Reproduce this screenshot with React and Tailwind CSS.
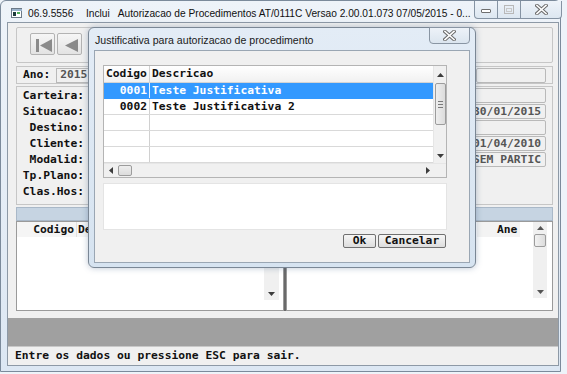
import React from "react";

const MONO = "font-['DejaVu_Sans_Mono',monospace] font-bold text-[11.3px] leading-none";
const SANS = "font-['Liberation_Sans',Arial,sans-serif]";

function Arrow({ dir, color = "#3c3c3c" }) {
  const paths = {
    up: "M0 4 L3.5 0 L7 4Z",
    down: "M0 0 L7 0 L3.5 4Z",
    left: "M4 0 L4 7 L0 3.5Z",
    right: "M0 0 L4 3.5 L0 7Z",
  };
  const vert = dir === "up" || dir === "down";
  return (
    <svg width={vert ? 7 : 4} height={vert ? 4 : 7} viewBox={vert ? "0 0 7 4" : "0 0 4 7"}>
      <path d={paths[dir]} fill={color} />
    </svg>
  );
}

function Field({ value = "", className = "" }) {
  return (
    <div
      className={`h-[15px] w-[90px] rounded-[2px] border border-[#b9b9b9] bg-[#f0f0f0] flex items-center justify-end pr-[4px] text-[#555555] ${MONO} ${className}`}
    >
      {value}
    </div>
  );
}

function XGlyph({ w = 13, h = 11 }) {
  return (
    <svg width={w} height={h} viewBox="0 0 13 11">
      <path d="M2 1.5 L11 9.5 M11 1.5 L2 9.5" stroke="#6b6b6b" strokeWidth="3.6" strokeLinecap="square" />
      <path d="M2 1.5 L11 9.5 M11 1.5 L2 9.5" stroke="#ffffff" strokeWidth="1.6" strokeLinecap="square" />
    </svg>
  );
}

function DialogGrid() {
  const rows = [
    { c: "0001", d: "Teste Justificativa", sel: true },
    { c: "0002", d: "Teste Justificativa 2" },
    { c: "", d: "" },
    { c: "", d: "" },
    { c: "", d: "" },
  ];
  return (
    <div className="w-[344px] h-[113px] border border-[#b4b4b4] bg-white flex flex-col">
      <div className="flex flex-1 min-h-0">
        <div className="flex-1 flex flex-col">
          <div className={`h-[17px] flex border-b border-[#d4d4d4] bg-gradient-to-b from-[#ffffff] to-[#f1f1f1] text-[#111111] ${MONO}`}>
            <div className="w-[46px] border-r border-[#d0d0d0] flex items-center pl-[2px]">Codigo</div>
            <div className="flex-1 flex items-center pl-[2px]">Descricao</div>
          </div>
          {rows.map((r, i) => (
            <div
              key={i}
              className={`h-[16px] flex border-b ${r.sel ? "bg-[#3399ff] text-white border-[#3399ff]" : "text-[#111111] border-[#d9d9d9]"} ${MONO}`}
            >
              <div className={`w-[46px] border-r ${r.sel ? "border-[#e8f1fb]" : "border-[#d0d0d0]"} flex items-center justify-end pr-[2px]`}>
                {r.c}
              </div>
              <div className="flex-1 flex items-center pl-[2px] whitespace-pre">{r.d}</div>
            </div>
          ))}
        </div>
        <div className="w-[13px] bg-[#f0f0f0] flex flex-col items-center border-l border-[#e6e6e6]">
          <div className="h-[17px] flex items-center justify-center pt-[1px]">
            <Arrow dir="up" />
          </div>
          <div className="w-[11px] h-[42px] rounded-[2px] border border-[#9c9c9c] bg-gradient-to-r from-[#eeeeee] to-[#dcdcdc] flex flex-col items-center justify-center gap-[2px]">
            <div className="w-[5px] h-px bg-[#7a7a7a]" />
            <div className="w-[5px] h-px bg-[#7a7a7a]" />
            <div className="w-[5px] h-px bg-[#7a7a7a]" />
          </div>
          <div className="flex-1" />
          <div className="h-[14px] flex items-center justify-center">
            <Arrow dir="down" />
          </div>
        </div>
      </div>
      <div className="h-[14px] bg-[#f0f0f0] flex items-center border-t border-[#e6e6e6]">
        <div className="w-[14px] flex justify-center">
          <Arrow dir="left" />
        </div>
        <div className="w-[14px] h-[11px] rounded-[2px] border border-[#9c9c9c] bg-gradient-to-b from-[#eeeeee] to-[#dcdcdc]" />
        <div className="flex-1" />
        <div className="w-[10px] flex justify-center">
          <Arrow dir="right" />
        </div>
        <div className="w-[13px]" />
      </div>
    </div>
  );
}

function Dialog() {
  return (
    <div className="absolute left-[88px] top-[27px] w-[388px] h-[241px] rounded-[6px] border border-[#7a8795] bg-gradient-to-b from-[#e3ecf6] to-[#d6e3f0] shadow-[0_0_6px_rgba(60,90,130,0.35)] flex flex-col">
      <div className="h-[22px] relative">
        <div className={`absolute left-[6px] top-[7px] text-[10.6px] leading-none text-[#1a1a1a] ${SANS}`}>
          Justificativa para autorizacao de procedimento
        </div>
        <div className="absolute left-[340px] top-[-1px] w-[41px] h-[17px] rounded-b-[4px] border border-[#8995a3] bg-gradient-to-b from-[#edf2f8] to-[#dbe5ef] flex items-center justify-center">
          <XGlyph />
        </div>
      </div>
      <div className="ml-[5px] w-[376px] h-[213px] border border-[#9aa6b3] bg-[#f0f0f0] flex flex-col pl-[8px] pt-[14px]">
        <DialogGrid />
        <div className="mt-[5px] w-[344px] h-[47px] bg-white border border-[#e4e4e4]" />
        <div className="mt-[4px] w-[344px] flex justify-end gap-[2px] pr-[1px]">
          <div className={`w-[33px] h-[14px] rounded-[2px] border border-[#707070] bg-gradient-to-b from-[#f6f6f6] to-[#dddddd] flex items-center justify-center text-[#111111] ${MONO}`}>
            Ok
          </div>
          <div className={`w-[68px] h-[14px] rounded-[2px] border border-[#707070] bg-gradient-to-b from-[#f6f6f6] to-[#dddddd] flex items-center justify-center text-[#111111] ${MONO}`}>
            Cancelar
          </div>
        </div>
      </div>
    </div>
  );
}

function ToolButton({ children }) {
  return (
    <div className="w-[25px] h-[22px] rounded-[2px] border border-[#b3b3b3] bg-gradient-to-b from-[#f6f6f6] to-[#e3e3e3] relative">
      {children}
    </div>
  );
}

function WinButtons() {
  return (
    <div className="absolute left-[473px] top-0 flex h-[18px]">
      <div className="w-[24px] h-[18px] rounded-bl-[4px] border border-t-0 border-[#8593a3] bg-gradient-to-b from-[#eef3f9] to-[#dde7f1] flex items-center justify-center">
        <div className="w-[10px] h-[4px] mt-[3px] rounded-[1px] border border-[#6e6e6e] bg-white" />
      </div>
      <div className="w-[23px] h-[18px] border border-l-0 border-t-0 border-[#8593a3] bg-gradient-to-b from-[#eef3f9] to-[#dde7f1] flex items-center justify-center">
        <div className="w-[10px] h-[9px] border border-[#b8b8b8] flex items-center justify-center">
          <div className="w-[6px] h-[4px] border border-[#c8c8c8]" />
        </div>
      </div>
      <div className="w-[41px] h-[18px] rounded-br-[4px] border border-l-0 border-t-0 border-[#8593a3] bg-gradient-to-b from-[#eef3f9] to-[#dde7f1] flex items-center justify-center">
        <XGlyph />
      </div>
    </div>
  );
}

function BottomGrids() {
  return (
    <div className="ml-[8px] mr-[5px] h-[90px] flex">
      <div className="w-[268px] h-[90px] border border-[#9a9a9a] bg-white flex">
        <div className="flex-1 flex flex-col">
          <div className={`h-[15px] flex bg-[#f5f5f5] text-[#111111] ${MONO}`}>
            <div className="w-[59px] flex items-center justify-end pr-[2px]">Codigo</div>
            <div className="flex-1 flex items-center pl-[1px] border-l border-[#e0e0e0]">Descricao</div>
          </div>
        </div>
        <div className="w-[15px] h-[78px] bg-[#f0f0f0] flex flex-col items-center mr-[4px]">
          <div className="flex-1" />
          <div className="h-[12px] flex items-center">
            <Arrow dir="down" />
          </div>
        </div>
      </div>
      <div className="w-[2px] bg-[#6a6a6a] ml-[0px]" />
      <div className="flex-1 h-[90px] border border-[#9a9a9a] bg-white flex">
        <div className="flex-1 flex flex-col">
          <div className={`h-[15px] flex text-[#111111] ${MONO}`}>
            <div className="w-[190px]" />
            <div className="w-[43px] bg-[#f3f3f3] flex items-center pl-[20px]">Ane</div>
          </div>
        </div>
        <div className="w-[14px] h-[76px] bg-[#f0f0f0] flex flex-col items-center mr-[5px]">
          <div className="h-[12px] flex items-center">
            <Arrow dir="up" color="#555555" />
          </div>
          <div className="w-[12px] h-[13px] rounded-[2px] border border-[#9c9c9c] bg-gradient-to-r from-[#f2f2f2] to-[#dcdcdc]" />
          <div className="flex-1" />
          <div className="h-[12px] flex items-center">
            <Arrow dir="down" color="#555555" />
          </div>
        </div>
      </div>
    </div>
  );
}

export default function App() {
  const labels = ["Carteira:", "Situacao:", "Destino:", "Cliente:", "Modalid:", "Tp.Plano:", "Clas.Hos:"];
  const fields = [
    { v: "", show: true },
    { v: "30/01/2015", show: true },
    { v: "", show: true },
    { v: "01/04/2010", show: true },
    { v: "SEM PARTIC", show: true },
    { v: "", show: false },
    { v: "", show: false },
  ];
  return (
    <div className="w-[567px] h-[374px] bg-[#eef3f9] overflow-hidden relative">
      <div className="w-[561px] h-[372px] border border-[#7b8a9b] rounded-t-[6px] bg-gradient-to-b from-[#eef3f9] to-[#dce7f3] flex flex-col">
        <div className="h-[21px] relative">
          <svg className="absolute left-[10px] top-[7px]" width="11" height="10" viewBox="0 0 11 10">
            <rect x="0.5" y="0.5" width="10" height="9" fill="#ffffff" stroke="#6c7a88" />
            <rect x="1" y="1" width="10" height="2" fill="#9bb3cc" />
            <rect x="2" y="4" width="3" height="4" fill="#1e3b3b" />
            <rect x="6" y="4" width="3" height="2" fill="#4fae5a" />
          </svg>
          <div className={`absolute left-[27px] top-[8px] flex whitespace-pre text-[10.2px] leading-none text-[#111111] ${SANS}`}>
            <span className="w-[58px]">06.9.5556</span>
            <span>{"Inclui   Autorizacao de Procedimentos AT/0111C Versao 2.00.01.073 07/05/2015 - 0..."}</span>
          </div>
          <WinButtons />
        </div>
        <div className="ml-[6px] mr-[1px] mb-[5px] h-[344px] border border-[#8d99a6] bg-[#f0f0f0] flex flex-col pt-[4px]">
          <div className="ml-[8px] mr-[5px] h-[36px] border border-[#c6c6c6] rounded-[2px] flex items-start pl-[13px] pt-[5px] gap-[2px]">
            <ToolButton>
              <svg className="absolute left-0 top-0" width="25" height="22" viewBox="0 0 25 22">
                <rect x="5" y="5" width="3" height="13" fill="#8a8a8a" />
                <path d="M9 11.5 L21 5 L21 18Z" fill="#8a8a8a" />
              </svg>
            </ToolButton>
            <ToolButton>
              <svg className="absolute left-0 top-0" width="25" height="22" viewBox="0 0 25 22">
                <path d="M7 11.5 L20 5 L20 18Z" fill="#8a8a8a" />
              </svg>
            </ToolButton>
          </div>
          <div className="mt-[3px] ml-[8px] mr-[5px] h-[18px] border border-[#c6c6c6] flex items-center">
            <div className={`ml-[6px] text-[#111111] ${MONO}`}>Ano:</div>
            <div className={`ml-[6px] h-[15px] w-[120px] border border-[#b9b9b9] bg-[#f0f0f0] flex items-center pl-[3px] text-[#555555] ${MONO}`}>
              2015
            </div>
            <div className="flex-1" />
            <div className="mr-[6px] h-[15px] w-[70px] rounded-[2px] border border-[#b9b9b9] bg-[#f0f0f0]" />
          </div>
          <div className="mt-[2px] ml-[8px] mr-[5px] h-[119px] border border-[#c6c6c6] flex pt-[1px]">
            <div className="w-[72px] flex flex-col border-r border-[#c6c6c6]">
              {labels.map((l) => (
                <div key={l} className={`h-[16px] flex items-center justify-end pr-[4px] text-[#111111] ${MONO}`}>
                  {l}
                </div>
              ))}
            </div>
            <div className="flex-1 flex flex-col items-end pr-[6px]">
              {fields.map((f, i) => (
                <div key={i} className="h-[16px] flex items-start">
                  {f.show ? <Field value={f.v} /> : null}
                </div>
              ))}
              <div className="h-[2px]" />
            </div>
          </div>
          <div className="mt-[2px] ml-[8px] mr-[5px] h-[14px] bg-[#c6d4e2] border border-[#a9b8c8]" />
          <BottomGrids />
          <div className="mt-[7px] h-[28px] bg-[#a0a0a0]" />
          <div className={`h-[19px] border-t border-[#c8c8c8] flex items-center pl-[7px] text-[#111111] ${MONO}`}>
            Entre os dados ou pressione ESC para sair.
          </div>
        </div>
      </div>
      <Dialog />
    </div>
  );
}
